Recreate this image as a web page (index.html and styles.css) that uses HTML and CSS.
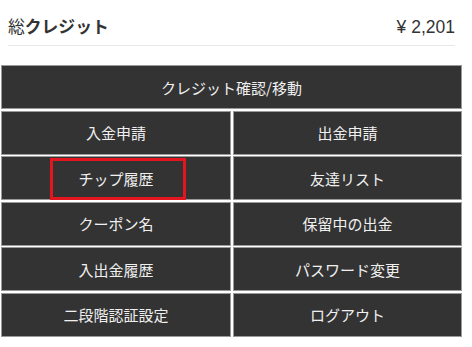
FILE: index.html
```html
<!DOCTYPE html>
<html lang="ja">
<head>
<meta charset="utf-8">
<link rel="stylesheet" href="styles.css">
</head>
<body>
<div class="page">
  <div class="summary">
    <div class="summary-title">総<b>クレジット</b></div>
    <div class="summary-value">¥ 2,201</div>
  </div>
  <div class="menu">
    <a class="cell wide">クレジット確認/移動</a>
    <a class="cell">入金申請</a>
    <a class="cell">出金申請</a>
    <a class="cell">チップ履歴</a>
    <a class="cell">友達リスト</a>
    <a class="cell">クーポン名</a>
    <a class="cell">保留中の出金</a>
    <a class="cell">入出金履歴</a>
    <a class="cell">パスワード変更</a>
    <a class="cell">二段階認証設定</a>
    <a class="cell">ログアウト</a>
    <div class="highlight"></div>
  </div>
</div>
</body>
</html>
```
FILE: styles.css
```css
html, body {
  margin: 0;
  padding: 0;
  background: #fff;
}
.page {
  font-family: "Noto Sans CJK JP", "Liberation Sans", sans-serif;
  width: 472px;
  height: 347px;
  position: relative;
}
.summary {
  margin: 0 17px 0 8px;
  padding-top: 14px;
  height: 31px;
  border-bottom: 1px solid #e8e8e8;
  display: flex;
  justify-content: space-between;
  align-items: flex-start;
  color: #333;
}
.summary-title {
  font-size: 16.8px;
  line-height: 24px;
}
.summary-title b {
  font-weight: 700;
}
.summary-value {
  font-family: "Liberation Sans", "Noto Sans CJK JP", sans-serif;
  font-size: 17.5px;
  line-height: 24px;
  padding-top: 1px;
}
.menu {
  position: relative;
  margin: 19px 0 0 1px;
  width: 461px;
  display: grid;
  grid-template-columns: 230px 229px;
  grid-auto-rows: 44px;
  gap: 1.6px 2px;
}
.cell {
  box-sizing: border-box;
  background: #333;
  border: 1px solid #9a9a9a;
  color: #f0f0f0;
  font-size: 15px;
  display: flex;
  align-items: center;
  justify-content: center;
  text-decoration: none;
}
.wide {
  grid-column: 1 / 3;
}
.highlight {
  position: absolute;
  left: 49px;
  top: 93px;
  width: 136px;
  height: 42px;
  box-sizing: border-box;
  border: 3.5px solid #e3161f;
}
```
